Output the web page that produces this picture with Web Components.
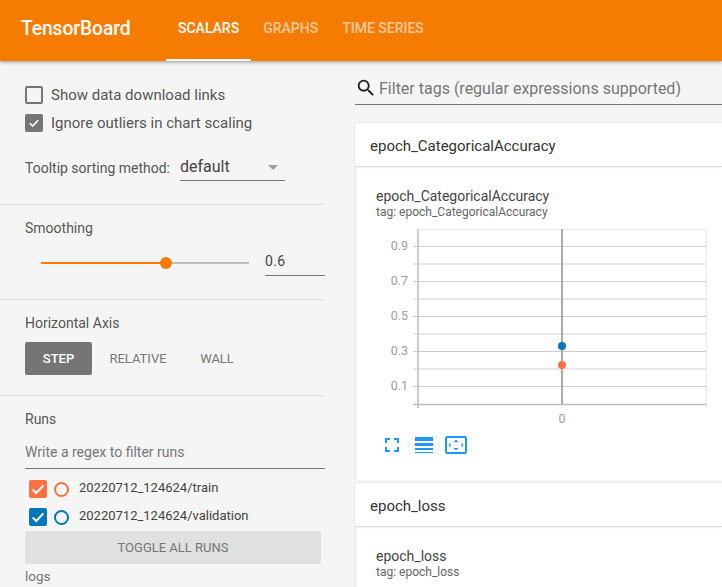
<!DOCTYPE html>
<html>
<head>
<meta charset="utf-8">
<title>TensorBoard</title>
<style>
  html, body { margin: 0; height: 100%; overflow: hidden; }
  body { background: #f5f5f5; font-family: Roboto, "Liberation Sans", sans-serif; }
</style>
</head>
<body>
<tb-app></tb-app>
<script>
const CHECK = `<svg viewBox="0 0 18 18" width="18" height="18"><path d="M3.6 9.4l3.7 3.6 7-7.6" fill="none" stroke="#fff" stroke-width="2"/></svg>`;

class TbTab extends HTMLElement {
  connectedCallback() {
    const active = this.hasAttribute("active");
    this.attachShadow({ mode: "open" }).innerHTML = `
      <style>
        :host {
          display: flex; align-items: center; height: 61px; box-sizing: border-box;
          padding: 0 12px 4px; font-size: 14px; font-weight: 500;
          color: ${active ? "#fff" : "rgba(255,255,255,.6)"};
          border-bottom: 2px solid ${active ? "#fff" : "transparent"};
        }
      </style><slot></slot>`;
  }
}

class TbHeader extends HTMLElement {
  connectedCallback() {
    this.attachShadow({ mode: "open" }).innerHTML = `
      <style>
        :host {
          display: flex; height: 61px; background: #f57c00; position: relative; z-index: 2;
          box-shadow: 0 1px 4px rgba(0,0,0,.4); color: #fff;
        }
        .title { font-size: 19.3px; font-weight: 500; width: 166px; box-sizing: border-box; padding: 17px 0 0 21px; letter-spacing: -.1px; }
        .tabs { display: flex; }
      </style>
      <div class="title">TensorBoard</div>
      <div class="tabs">
        <tb-tab active>SCALARS</tb-tab><tb-tab>GRAPHS</tb-tab><tb-tab>TIME SERIES</tb-tab>
      </div>`;
  }
}

class TbCheck extends HTMLElement {
  connectedCallback() {
    const on = this.hasAttribute("checked");
    this.attachShadow({ mode: "open" }).innerHTML = `
      <style>
        :host { display: flex; align-items: center; gap: 8px; height: 28px; font-size: 15px; color: #555; }
        .box {
          width: 18px; height: 18px; box-sizing: border-box; border-radius: 2px;
          border: 2px solid #757575; background: ${on ? "#757575" : "transparent"};
          display: flex; align-items: center; justify-content: center;
        }
      </style>
      <div class="box">${on ? CHECK : ""}</div><slot></slot>`;
  }
}

class TbSection extends HTMLElement {
  connectedCallback() {
    this.attachShadow({ mode: "open" }).innerHTML = `
      <style>
        :host { display: block; border-bottom: 1px solid #e4e4e4; box-sizing: border-box; padding: 0 0 0 25px; }
        .label { font-size: 14px; color: #555; line-height: 16px; }
      </style>
      <div class="label"><slot name="label"></slot></div>
      <slot></slot>`;
  }
}

class TbSlider extends HTMLElement {
  connectedCallback() {
    this.attachShadow({ mode: "open" }).innerHTML = `
      <style>
        :host { display: flex; align-items: flex-start; height: 30px; }
        .track { width: 208px; height: 2px; margin: 16px 0 0 16px; background: #bdbdbd; position: relative; }
        .fill { width: 125px; height: 2px; background: #f57c00; }
        .thumb { position: absolute; left: 119px; top: -5px; width: 12px; height: 12px; border-radius: 50%; background: #f57c00; }
        .value {
          width: 60px; height: 30px; margin-left: 16px; box-sizing: border-box; padding-top: 7px;
          border-bottom: 1px solid #757575; font-size: 14px; color: #444; line-height: 16px; letter-spacing: .4px;
        }
      </style>
      <div class="track"><div class="fill"></div><div class="thumb"></div></div>
      <div class="value"><slot></slot></div>`;
  }
}

class TbAxis extends HTMLElement {
  connectedCallback() {
    this.attachShadow({ mode: "open" }).innerHTML = `
      <style>
        :host { display: flex; height: 33px; font-size: 13px; font-weight: 400; color: #777; }
        div { display: flex; align-items: center; justify-content: center; border-radius: 2px; }
        .on { width: 67px; background: #757575; color: #fff; font-weight: 500; }
        .rel { width: 92px; }
        .wall { width: 66px; }
      </style>
      <div class="on">STEP</div><div class="rel">RELATIVE</div><div class="wall">WALL</div>`;
  }
}

class TbRun extends HTMLElement {
  connectedCallback() {
    const c = this.getAttribute("color");
    this.attachShadow({ mode: "open" }).innerHTML = `
      <style>
        :host { display: flex; align-items: center; height: 28px; font-size: 13px; color: #444; padding-left: 4px; }
        .box { width: 18px; height: 18px; border-radius: 2px; background: ${c}; display: flex; }
        .dot { width: 15px; height: 15px; box-sizing: border-box; border: 2px solid ${c}; border-radius: 50%; margin: 1px 10px 0 7px; }
        .name { padding-bottom: 3px; }
      </style>
      <div class="box">${CHECK}</div><div class="dot"></div><div class="name"><slot></slot></div>`;
  }
}

class TbSidebar extends HTMLElement {
  connectedCallback() {
    this.attachShadow({ mode: "open" }).innerHTML = `
      <style>
        :host { display: block; width: 325px; flex: none; }
        .first { height: 144px; }
        .checks { padding-top: 20px; }
        .sort { display: flex; font-size: 14px; color: #555; margin-top: 15px; }
        .sort span { padding-top: 8px; }
        .select {
          width: 105px; height: 29px; box-sizing: border-box; margin-left: 10px; padding-top: 5px;
          border-bottom: 1px solid #757575; font-size: 16px; color: #444; position: relative;
        }
        .caret {
          position: absolute; right: 7px; top: 13px; width: 0; height: 0;
          border: 5px solid transparent; border-top-color: #9e9e9e; border-bottom: 0;
        }
        .smooth { height: 95px; padding-top: 15px; }
        tb-slider { margin-top: 10px; }
        .axis { height: 96px; padding-top: 15px; }
        tb-axis { margin-top: 11px; }
        .runs { padding: 15px 0 0 25px; color: #555; font-size: 14px; }
        .runs-title { line-height: 16px; }
        .regex {
          height: 34px; box-sizing: border-box; margin-top: 8px; padding-top: 9px; width: 300px;
          border-bottom: 1px solid #757575; color: #777; font-size: 14px; line-height: 16px;
        }
        .list { padding-top: 6px; }
        .toggle {
          width: 296px; height: 33px; background: #e0e0e0; border-radius: 2px; color: #757575;
          display: flex; align-items: center; justify-content: center; font-size: 13px;
        }
        .logs { font-size: 13.5px; color: #777; margin-top: 4px; }
      </style>
      <tb-section class="first">
        <div class="checks">
          <tb-check>Show data download links</tb-check>
          <tb-check checked>Ignore outliers in chart scaling</tb-check>
        </div>
        <div class="sort">
          <span>Tooltip sorting method:</span>
          <div class="select">default<i class="caret"></i></div>
        </div>
      </tb-section>
      <tb-section class="smooth">
        <span slot="label">Smoothing</span>
        <tb-slider>0.6</tb-slider>
      </tb-section>
      <tb-section class="axis">
        <span slot="label">Horizontal Axis</span>
        <tb-axis></tb-axis>
      </tb-section>
      <div class="runs">
        <div class="runs-title">Runs</div>
        <div class="regex">Write a regex to filter runs</div>
        <div class="list">
          <tb-run color="#ff7043">20220712_124624/train</tb-run>
          <tb-run color="#0077bb">20220712_124624/validation</tb-run>
        </div>
        <div class="toggle">TOGGLE ALL RUNS</div>
        <div class="logs">logs</div>
      </div>`;
  }
}

class TbChart extends HTMLElement {
  connectedCallback() {
    const majors = [[246, "0.9"], [281, "0.7"], [316, "0.5"], [351, "0.3"], [386, "0.1"]];
    const minors = [264, 299, 334, 369];
    const y = v => v - 229; // svg y is page y minus top of the chart
    const grid = majors.map(([p, t]) => `
        <line x1="37" x2="330" y1="${y(p) + .5}" y2="${y(p) + .5}" stroke="#ccc"/>
        <text x="32" y="${y(p) + 4}" text-anchor="end">${t}</text>`).join("");
    const minor = minors.map(p => `<line x1="37" x2="330" y1="${y(p)}" y2="${y(p)}" stroke="#e8e8e8" stroke-width="2"/>`).join("");
    this.attachShadow({ mode: "open" }).innerHTML = `
      <style>
        :host { display: block; }
        svg { display: block; }
        text { font: 12.5px Roboto, "Liberation Sans", sans-serif; fill: #a0a0a0; }
        .tools { display: flex; align-items: center; height: 24px; margin-top: 6px; padding-left: 8px; }
      </style>
      <svg width="346" height="198" viewBox="0 0 346 198">
        <line x1="42" x2="330" y1=".5" y2=".5" stroke="#e8e8e8"/>
        ${minor}${grid}
        <line x1="42" x2="42" y1="0" y2="179" stroke="#ccc" stroke-width="2"/>
        <line x1="330.5" x2="330.5" y1="0" y2="179" stroke="#e8e8e8"/>
        <line x1="37" x2="330" y1="175.5" y2="175.5" stroke="#bbb" stroke-width="1.5"/>
        <line x1="186" x2="186" y1="0" y2="175" stroke="#aaa" stroke-width="2"/>
        <line x1="186" x2="186" y1="175" y2="179" stroke="#e0e0e0"/>
        <circle cx="186" cy="${y(346)}" r="4" fill="#0077bb"/>
        <circle cx="186" cy="${y(365)}" r="4" fill="#ff7043"/>
        <text x="186" y="194" text-anchor="middle">0</text>
      </svg>
      <div class="tools">
        <svg width="16" height="16" viewBox="0 0 16 16" fill="none" stroke="#2196f3" stroke-width="2" style="margin-right:15px">
          <path d="M2 6V2h4M10 2h4v4M14 10v4h-4M6 14H2v-4"/>
        </svg>
        <svg width="18" height="16" viewBox="0 0 18 16" fill="#2196f3" style="margin-right:12px">
          <rect width="18" height="4"/><rect y="6" width="18" height="3"/><rect y="11" width="18" height="2"/><rect y="15" width="18" height="1"/>
        </svg>
        <svg width="22" height="18" viewBox="0 0 22 18" fill="#2196f3">
          <rect x="1" y="1" width="20" height="16" rx="1" fill="none" stroke="#2196f3" stroke-width="2"/>
          <path d="M11 3.5l2.5 2.5h-5zM11 14.5l-2.5-2.5h5zM3.5 9l2-2.5v5zM18.5 9l-2 2.5v-5z"/>
        </svg>
      </div>`;
  }
}

class TbCard extends HTMLElement {
  connectedCallback() {
    const tag = this.getAttribute("tag");
    this.attachShadow({ mode: "open" }).innerHTML = `
      <style>
        :host { display: block; }
        .head {
          height: 44px; background: #fff; box-sizing: border-box; padding: 14px 0 0 15px;
          font-size: 15px; line-height: 18px; color: #333; border-bottom: 1px solid #e0e0e0;
          box-shadow: 0 0 2px rgba(0,0,0,.14); position: relative;
        }
        .body { background: #fff; border-left: 1px solid #e6e6e6; padding: 22px 0 23px 20px; box-sizing: border-box; }
        .title { font-size: 14px; line-height: 15px; color: #444; }
        .sub { font-size: 12px; line-height: 14px; color: #666; margin: 1px 0 10px; }
      </style>
      <div class="head">${tag}</div>
      <div class="body">
        <div class="title">${tag}</div>
        <div class="sub">tag: ${tag}</div>
        <slot></slot>
      </div>`;
  }
}

class TbMain extends HTMLElement {
  connectedCallback() {
    this.attachShadow({ mode: "open" }).innerHTML = `
      <style>
        :host { display: block; flex: 1; min-width: 0; margin-left: 30px; }
        .filter {
          display: flex; align-items: center; gap: 2px; height: 33px; margin-top: 11px; box-sizing: border-box;
          border-bottom: 1px solid #757575; font-size: 16px; color: #777; white-space: nowrap;
        }
        .cards { margin-top: 18px; display: flex; flex-direction: column; gap: 3px; }
      </style>
      <div class="filter">
        <svg width="22" height="22" viewBox="0 0 24 24" fill="#212121" style="flex:none">
          <path d="M15.5 14h-.79l-.28-.27A6.471 6.471 0 0 0 16 9.5 6.5 6.5 0 1 0 9.5 16c1.61 0 3.09-.59 4.23-1.57l.27.28v.79l5 4.99L20.49 19l-4.99-5zm-6 0C7.01 14 5 11.99 5 9.5S7.01 5 9.5 5 14 7.01 14 9.5 11.99 14 9.5 14z"/>
        </svg>
        <span>Filter tags (regular expressions supported)</span>
      </div>
      <div class="cards">
        <tb-card tag="epoch_CategoricalAccuracy"><tb-chart></tb-chart></tb-card>
        <tb-card tag="epoch_loss"></tb-card>
      </div>`;
  }
}

class TbApp extends HTMLElement {
  connectedCallback() {
    this.attachShadow({ mode: "open" }).innerHTML = `
      <style>
        :host { display: block; height: 100vh; overflow: hidden; }
        .page { display: flex; }
      </style>
      <tb-header></tb-header>
      <div class="page">
        <tb-sidebar></tb-sidebar>
        <tb-main></tb-main>
      </div>`;
  }
}

customElements.define("tb-tab", TbTab);
customElements.define("tb-header", TbHeader);
customElements.define("tb-check", TbCheck);
customElements.define("tb-section", TbSection);
customElements.define("tb-slider", TbSlider);
customElements.define("tb-axis", TbAxis);
customElements.define("tb-run", TbRun);
customElements.define("tb-sidebar", TbSidebar);
customElements.define("tb-chart", TbChart);
customElements.define("tb-card", TbCard);
customElements.define("tb-main", TbMain);
customElements.define("tb-app", TbApp);
</script>
</body>
</html>
